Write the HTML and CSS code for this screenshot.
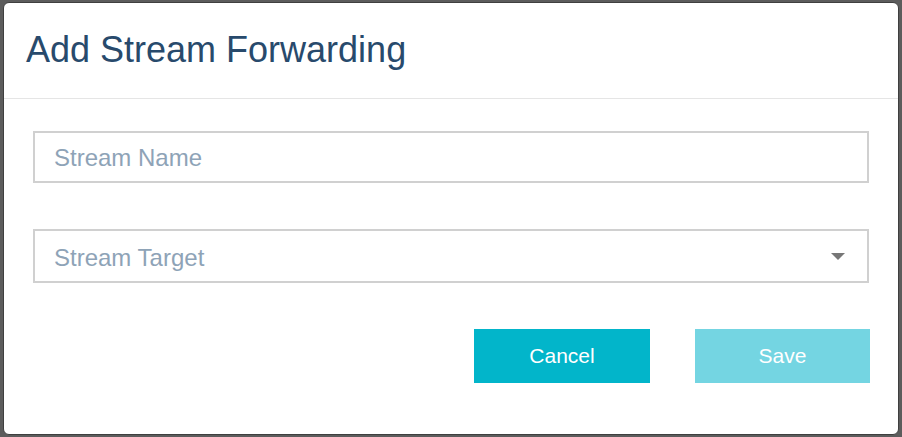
FILE: index.html
```html
<!DOCTYPE html>
<html>
<head>
<meta charset="utf-8">
<link rel="stylesheet" href="styles.css">
</head>
<body>
<div class="modal">
  <div class="modal-header">
    <h1 class="title">Add Stream Forwarding</h1>
  </div>
  <div class="modal-body">
    <div class="field text">
      <input class="input" type="text" placeholder="Stream Name">
    </div>
    <div class="field select">
      <span class="placeholder">Stream Target</span>
      <span class="caret"></span>
    </div>
    <div class="actions">
      <button class="btn btn-cancel">Cancel</button>
      <button class="btn btn-save">Save</button>
    </div>
  </div>
</div>
</body>
</html>
```
FILE: styles.css
```css
html, body {
  margin: 0;
  padding: 0;
}
body {
  background: #5c5c5c;
  width: 902px;
  height: 437px;
  overflow: hidden;
  font-family: "Liberation Sans", Arial, sans-serif;
}
.modal {
  box-sizing: border-box;
  margin: 2px 0 0 3px;
  width: 896px;
  height: 433px;
  background: #fff;
  border: 1px solid #3f3f3f;
  border-radius: 6px;
  overflow: hidden;
}
.modal-header {
  padding: 27px 22px 28px;
  border-bottom: 1px solid #e5e5e5;
}
.title {
  margin: 0;
  font-size: 36px;
  line-height: 40px;
  font-weight: normal;
  color: #284a6c;
}
.modal-body {
  padding: 32px 28px 0 29px;
  display: flex;
  flex-direction: column;
}
.field {
  box-sizing: border-box;
  width: 836px;
  border: 2px solid #d0d0d0;
  margin-bottom: 46px;
  display: flex;
  align-items: center;
}
.text {
  height: 52px;
  padding-top: 2px;
}
.input {
  border: 0;
  outline: 0;
  width: 100%;
  height: 100%;
  padding: 0 0 0 19px;
  font-family: "Liberation Sans", Arial, sans-serif;
  font-size: 24px;
  color: #333;
  background: transparent;
}
.input::placeholder {
  color: #8ea3b7;
}
.select {
  height: 54px;
  justify-content: space-between;
  padding: 3px 22px 0 19px;
}
.placeholder {
  font-size: 24px;
  color: #8ea3b7;
}
.caret {
  width: 0;
  height: 0;
  margin-top: -3px;
  border-left: 7px solid transparent;
  border-right: 7px solid transparent;
  border-top: 7px solid #777;
}
.actions {
  display: flex;
  justify-content: flex-end;
  gap: 45px;
  width: 837px;
}
.btn {
  border: 0;
  height: 54px;
  width: 176px;
  color: #fff;
  font-family: "Liberation Sans", Arial, sans-serif;
  font-size: 21px;
  padding: 0;
}
.btn-cancel {
  background: #02b5ca;
}
.btn-save {
  width: 175px;
  background: #74d5e2;
}
```
